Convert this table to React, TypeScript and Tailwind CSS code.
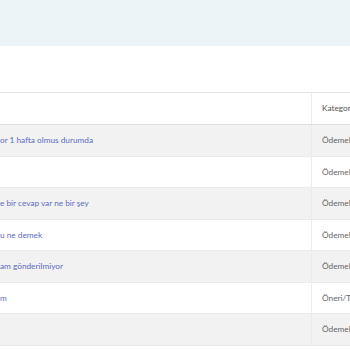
const rows = [
  { title: "or 1 hafta olmus durumda", cat: "Ödemeler" },
  { title: "", cat: "Ödemeler" },
  { title: "e bir cevap var ne bir şey", cat: "Ödemeler" },
  { title: "u ne demek", cat: "Ödemeler" },
  { title: "am gönderilmiyor", cat: "Ödemeler" },
  { title: "m", cat: "Öneri/Talep" },
  { title: "", cat: "Ödemeler" },
];

export default function App() {
  return (
    <div className="h-[350px] w-[350px] overflow-hidden bg-white font-['Lato',sans-serif] text-[8.25px]">
      <div className="h-[46px] bg-[#edf4f8]" />
      <div className="h-[46px]" />
      <div className="flex w-[420px] flex-col border-t border-[#e6e6e6]">
        <div className="flex h-[32px] border-b border-[#dcdcdc]">
          <div className="w-[312px] border-r border-[#ececec]" />
          <div className="flex flex-1 items-center pl-[10px] text-[#555]">Kategori</div>
        </div>
        {rows.map((r, i) => (
          <div
            key={i}
            className={`flex h-[31.5px] border-b border-[#ebebeb] ${i % 2 === 0 ? "bg-[#f2f2f2]" : "bg-white"}`}
          >
            <div className="flex w-[312px] items-center border-r border-[#ececec] text-[#5a6cc6]">
              {r.title}
            </div>
            <div className="flex flex-1 items-center pl-[10px] text-[#666]">{r.cat}</div>
          </div>
        ))}
      </div>
    </div>
  );
}
